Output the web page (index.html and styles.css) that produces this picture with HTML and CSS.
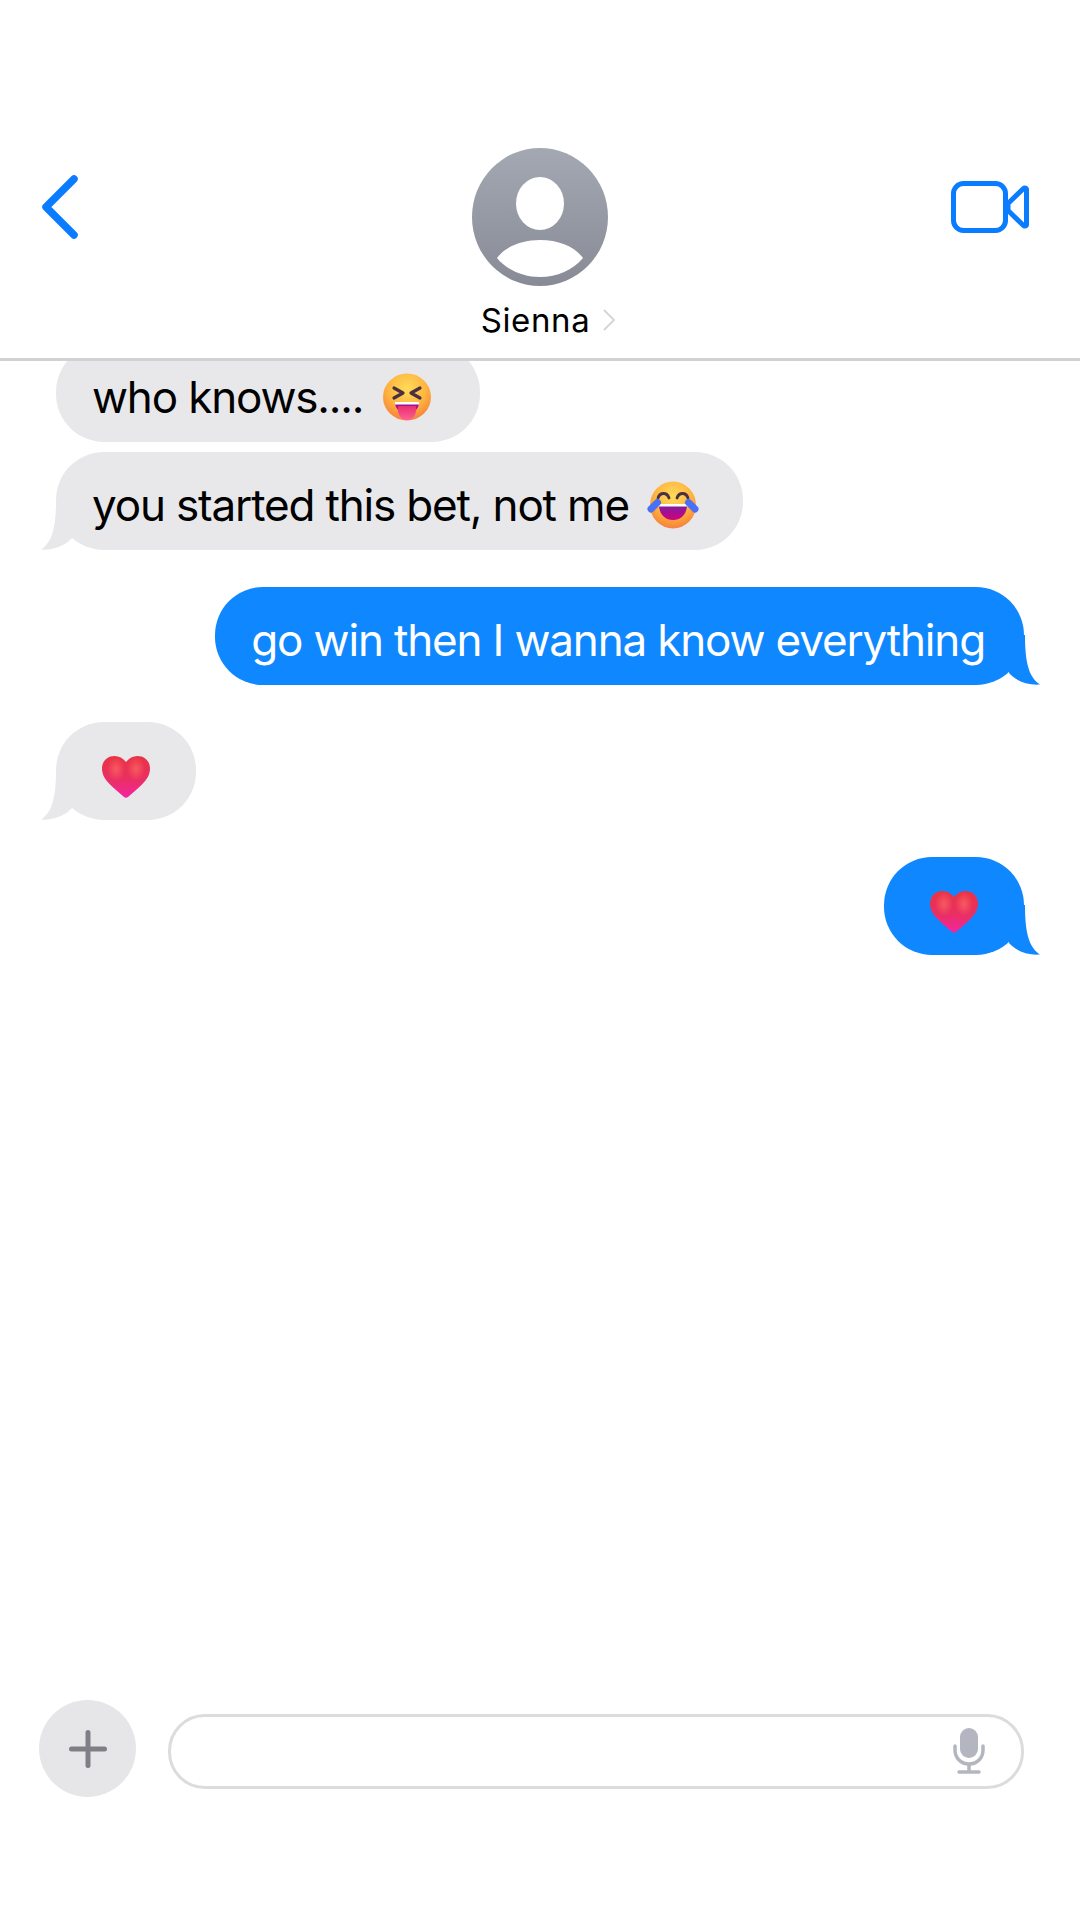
FILE: index.html
```html
<!DOCTYPE html>
<html>
<head>
    <title>Sienna</title>
    <link rel="stylesheet" href="styles.css">
</head>
<body>
    <svg class="defs" width="0" height="0">
        <defs>
            <radialGradient id="face" cx="0.5" cy="0.32" r="0.72">
                <stop offset="0" stop-color="#ffdc5a"/>
                <stop offset="0.55" stop-color="#ffb53f"/>
                <stop offset="0.88" stop-color="#f78a3a"/>
                <stop offset="1" stop-color="#f4707a"/>
            </radialGradient>
            <linearGradient id="mouth" x1="0" y1="0" x2="0" y2="1">
                <stop offset="0" stop-color="#7a1fa0"/>
                <stop offset="1" stop-color="#d1007f"/>
            </linearGradient>
            <linearGradient id="tongue" x1="0" y1="0" x2="0" y2="1">
                <stop offset="0" stop-color="#e8306f"/>
                <stop offset="1" stop-color="#ff5f96"/>
            </linearGradient>
            <linearGradient id="heart" x1="0" y1="0" x2="0" y2="1">
                <stop offset="0" stop-color="#e93444"/>
                <stop offset="0.55" stop-color="#e92f62"/>
                <stop offset="1" stop-color="#f3259f"/>
            </linearGradient>
            <radialGradient id="shine" cx="0.5" cy="0.5" r="0.5">
                <stop offset="0" stop-color="#ff6a66" stop-opacity="0.7"/>
                <stop offset="1" stop-color="#ff6a66" stop-opacity="0"/>
            </radialGradient>
            <symbol id="heart-emoji" viewBox="0 0 48 42">
                <path d="M24 6C21 2 17 0 12.500 0 5 0 0 5.500 0 12.500c0 6 3 11 8 16 5 5 10 9 14 12.500 1.200 1 2.800 1 4 0 4-3.500 9-7.500 14-12.500 5-5 8-10 8-16C48 5.500 43 0 35.500 0 31 0 27 2 24 6z" fill="url(#heart)"/>
                <ellipse cx="14" cy="13" rx="9" ry="12" fill="url(#shine)"/>
                <ellipse cx="34" cy="13" rx="9" ry="12" fill="url(#shine)"/>
            </symbol>
            <symbol id="tail" viewBox="0 0 32 50">
                <path d="M15 0C15 25 12 42 0 49.500 12 50.500 24 46 31 38L32 0z"/>
            </symbol>
        </defs>
    </svg>

    <div class="screen">
        <div class="top-bar">
            <div class="nav-left">
                <svg class="back-icon" viewBox="0 0 38 66">
                    <path d="M33 5 5 33l28 28" fill="none" stroke="#0a7cff" stroke-width="7.500" stroke-linecap="round" stroke-linejoin="round"/>
                </svg>
            </div>
            <div class="contact">
                <svg class="avatar" viewBox="0 0 136 138">
                    <defs>
                        <linearGradient id="avatar-bg" x1="0" y1="0" x2="0" y2="1">
                            <stop offset="0" stop-color="#a3a8b3"/>
                            <stop offset="1" stop-color="#888b95"/>
                        </linearGradient>
                    </defs>
                    <ellipse cx="68" cy="69" rx="68" ry="69" fill="url(#avatar-bg)"/>
                    <ellipse cx="68" cy="55.500" rx="24" ry="26.500" fill="#fff"/>
                    <path d="M25 110C33 99 49 92 68 92s35 7 43 18C101 122 85 129 68 129s-33-7-43-19z" fill="#fff"/>
                </svg>
                <div class="contact-name">
                    <span>Sienna</span>
                    <svg class="name-chevron" viewBox="0 0 12 22">
                        <path d="M1 1l10 10L1 21" fill="none" stroke="#d4d4d6" stroke-width="1.800"/>
                    </svg>
                </div>
            </div>
            <div class="nav-right">
                <svg class="video-icon" viewBox="0 0 78 52">
                    <rect x="2.500" y="2.500" width="52" height="47" rx="10" fill="none" stroke="#0a7cff" stroke-width="5"/>
                    <path d="M57 22.500 72.500 7.500c1-1 3-.5 3 1v35c0 1.500-2 2-3 1L57 29.500z" fill="none" stroke="#0a7cff" stroke-width="5" stroke-linejoin="round"/>
                </svg>
            </div>
        </div>

        <div class="thread">
            <div class="bubble received first">
                <span>who knows....</span>
                <svg class="emoji" viewBox="0 0 48 48">
                    <ellipse cx="24" cy="24" rx="24" ry="23.500" fill="url(#face)"/>
                    <path d="M11 15l9 5-9 5M37 15l-9 5 9 5" fill="none" stroke="#4a3040" stroke-width="3.200" stroke-linecap="round" stroke-linejoin="round"/>
                    <path d="M12 29h24c0 3-1 6-3 8H15c-2-2-3-5-3-8z" fill="url(#mouth)"/>
                    <path d="M12 29h24v2.500H12z" fill="#fff"/>
                    <path d="M15 33h18v4c0 6-4 10-9 10s-9-4-9-10z" fill="url(#tongue)"/>
                </svg>
            </div>
            <div class="bubble received tight">
                <span>you started this bet, not me</span>
                <svg class="emoji wide" viewBox="0 0 52 48">
                    <ellipse cx="26" cy="24" rx="23" ry="23.500" fill="url(#face)"/>
                    <path d="M11 17c2-6 9-6 11 0M30 17c2-6 9-6 11 0" fill="none" stroke="#4a3040" stroke-width="2.800" stroke-linecap="round"/>
                    <path d="M12 24h28c0 9-6 15-14 15S12 33 12 24z" fill="url(#mouth)"/>
                    <path d="M11 23h30v2.500H11z" fill="#fff"/>
                    <path d="M4 28l6.500-6.500M48 28l-6.500-6.500" fill="none" stroke="#4a70f5" stroke-width="7" stroke-linecap="round"/>
                </svg>
                <svg class="tail"><use href="#tail"/></svg>
            </div>
            <div class="bubble sent">
                <span>go win then I wanna know everything</span>
                <svg class="tail"><use href="#tail"/></svg>
            </div>
            <div class="bubble received heart-bubble">
                <svg class="heart"><use href="#heart-emoji"/></svg>
                <svg class="tail"><use href="#tail"/></svg>
            </div>
            <div class="bubble sent heart-bubble">
                <svg class="heart"><use href="#heart-emoji"/></svg>
                <svg class="tail"><use href="#tail"/></svg>
            </div>
        </div>

        <div class="composer">
            <div class="add-button">
                <svg class="plus-icon" viewBox="0 0 38 38">
                    <path d="M19 2.500v33M2.500 19h33" stroke="#7f7f85" stroke-width="5" stroke-linecap="round"/>
                </svg>
            </div>
            <div class="message-input">
                <svg class="mic-icon" viewBox="0 0 32 46">
                    <rect x="7" y="0" width="18" height="30" rx="9" fill="#b3b6c0"/>
                    <path d="M2 18v4c0 8 6 14 14 14s14-6 14-14v-4" fill="none" stroke="#b3b6c0" stroke-width="3.500" stroke-linecap="round"/>
                    <path d="M16 36v7" stroke="#b3b6c0" stroke-width="3.500"/>
                    <path d="M6 44h20" stroke="#b3b6c0" stroke-width="3.500" stroke-linecap="round"/>
                </svg>
            </div>
        </div>
    </div>
</body>
</html>
```

FILE: styles.css
```css
body {
    margin: 0;
    background-color: #fff;
    font-family: Inter, "Liberation Sans", sans-serif;
    color: #000;
}

.defs {
    position: absolute;
}

.screen {
    width: 1080px;
    height: 1920px;
    display: flex;
    flex-direction: column;
    overflow: hidden;
}

/* Top bar */
.top-bar {
    height: 361px;
    padding-top: 148px;
    box-sizing: border-box;
    border-bottom: 3px solid #d2d2d4;
    display: grid;
    grid-template-columns: 1fr auto 1fr;
    flex-shrink: 0;
    position: relative;
    z-index: 1;
    background-color: #fff;
}

.nav-left {
    padding: 26px 0 0 41px;
}

.nav-right {
    display: flex;
    justify-content: flex-end;
    padding: 33px 51px 0 0;
}

.back-icon {
    display: block;
    width: 38px;
    height: 66px;
}

.video-icon {
    display: block;
    width: 78px;
    height: 52px;
}

.contact {
    display: flex;
    flex-direction: column;
    align-items: center;
    position: relative;
}

.avatar {
    display: block;
    width: 136px;
    height: 138px;
}

.contact-name {
    display: flex;
    align-items: center;
    gap: 13px;
    height: 40px;
    margin-top: 14px;
    margin-left: 16px;
    font-size: 33px;
    letter-spacing: 0.6px;
}

.name-chevron {
    width: 12px;
    height: 22px;
}

/* Messages */
.thread {
    flex: 1;
    display: flex;
    flex-direction: column;
    gap: 37px;
    padding: 0 56px;
}

.bubble {
    position: relative;
    display: flex;
    align-items: center;
    height: 98px;
    box-sizing: border-box;
    padding: 7px 39px 0 36px;
    border-radius: 48px;
    font-size: 44px;
    letter-spacing: -1.16px;
    white-space: nowrap;
    flex-shrink: 0;
}

.received {
    align-self: flex-start;
    background-color: #e8e8ea;
    fill: #e8e8ea;
}

.sent {
    align-self: flex-end;
    background-color: #0f87ff;
    fill: #0f87ff;
    color: #fff;
}

.first {
    margin-top: -17px;
    padding-right: 49px;
}

.tight {
    margin-top: -27px;
    padding-right: 44px;
}

.emoji {
    width: 48px;
    height: 48px;
    margin-left: 20px;
}

.emoji.wide {
    width: 52px;
    margin-left: 18px;
}

.tail {
    position: absolute;
    bottom: 0;
    width: 32px;
    height: 50px;
}

.received .tail {
    left: -15px;
}

.sent .tail {
    right: -16px;
    transform: scaleX(-1);
}

.heart-bubble {
    width: 140px;
    justify-content: center;
    padding: 12px 0 0;
}

.heart {
    width: 48px;
    height: 42px;
}

/* Composer */
.composer {
    display: flex;
    align-items: center;
    gap: 32px;
    padding: 0 56px 123px 39px;
}

.add-button {
    width: 97px;
    height: 97px;
    border-radius: 50%;
    background-color: #e6e6e8;
    display: flex;
    align-items: center;
    justify-content: center;
    flex-shrink: 0;
}

.plus-icon {
    width: 38px;
    height: 38px;
}

.message-input {
    flex: 1;
    height: 75px;
    margin-top: 5px;
    box-sizing: border-box;
    border: 3px solid #dcdcde;
    border-radius: 37px;
    display: flex;
    align-items: center;
    justify-content: flex-end;
    padding-right: 36px;
}

.mic-icon {
    width: 32px;
    height: 46px;
}
```
